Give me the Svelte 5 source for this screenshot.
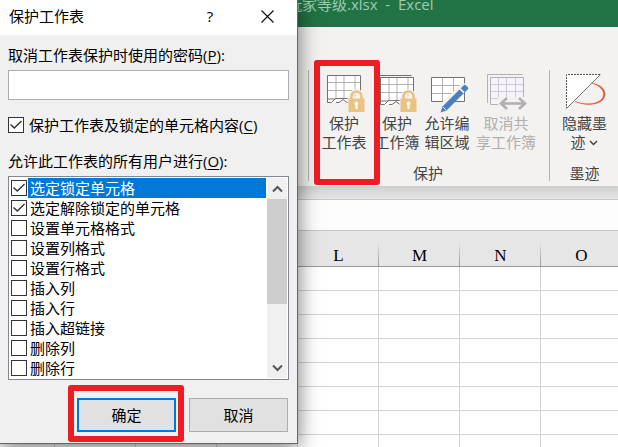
<script>
  const columns = ['', '', '', '', 'L', 'M', 'N', 'O'];
  const rows = Array.from({ length: 8 }, (_, i) => i);

  let options = $state([
    { label: '选定锁定单元格', checked: true },
    { label: '选定解除锁定的单元格', checked: true },
    { label: '设置单元格格式', checked: false },
    { label: '设置列格式', checked: false },
    { label: '设置行格式', checked: false },
    { label: '插入列', checked: false },
    { label: '插入行', checked: false },
    { label: '插入超链接', checked: false },
    { label: '删除列', checked: false },
    { label: '删除行', checked: false }
  ]);
  let selected = $state(0);
  let protect = $state(true);
  let password = $state('');
</script>

{#snippet lock(x)}
  <g transform="translate({x} 17)">
    <path d="M1 8h15v14H1z" fill="#f3f2f1" stroke="#f3f2f1" stroke-width="3" />
    <path d="M3.500 9V6.500a5 5 0 0 1 10 0V9" fill="none" stroke="#f3f2f1" stroke-width="5" />
    <path d="M3.500 9V6.500a5 5 0 0 1 10 0V9" fill="none" stroke="#eac282" stroke-width="2.600" />
    <path d="M.5 8.500h16V22H.5z" fill="#eac282" />
    <path d="M8.500 11.500a2 2 0 0 0-1 3.700V19h2v-3.800a2 2 0 0 0-1-3.700z" fill="#fff" />
  </g>
{/snippet}

<div class="window">
  <header class="titlebar">玩家等级.xlsx&nbsp; -&nbsp; Excel</header>

  <div class="ribbon">
    <section class="group protection">
      <div class="tools">
        <button class="tool sheet">
          <svg viewBox="0 0 44 41" width="44" height="41" aria-hidden="true">
            <path d="M5.500 2.500h33v22l-13 5-4-3-4 3h-12z" fill="#fff" />
            <path d="M14 3v23M22 3v23M33 3v21M6 9.500h32M6 17.500h32" fill="none" stroke="#b3b1af" />
            <path d="M38.500 20V2.500h-33v27h4l4-4h14M14 29.500h3l4-3 4 3h3M5.500 26h8" fill="none" stroke="#737170" />
            {@render lock(26)}
          </svg>
          <span>保护<br />工作表</span>
        </button>
        <button class="tool book">
          <svg viewBox="0 0 44 41" width="44" height="41" aria-hidden="true">
            <path d="M5.500 4.500h33v22l-13 5-4-3-4 3h-12z" fill="#fff" />
            <path d="M14 5v23M22 5v23M33 5v21M6 11.500h32M6 19.500h32" fill="none" stroke="#b3b1af" />
            <path d="M3.500 26V2.500h33M38.500 22V4.500h-33v27h4l4-4h14M14 31.500h3l4-3 4 3h3M5.500 28h8" fill="none" stroke="#737170" />
            {@render lock(25)}
          </svg>
          <span>保护<br />工作簿</span>
        </button>
        <button class="tool range">
          <svg viewBox="0 0 44 41" width="44" height="41" aria-hidden="true">
            <path d="M6.500 4.500h33v24h-33z" fill="#fff" />
            <path d="M17.500 5v23M28.500 5v23M7 12.500h32M7 20.500h32" stroke="#b3b1af" />
            <path d="M6.500 4.500h33v24h-33z" fill="none" stroke="#737170" />
            <path d="M41 12 18 34l-3 6" stroke="#f3f2f1" stroke-width="8" fill="none" />
            <path d="m17.500 33.500 17-17 4 4-17 17-6 2z" fill="#4a80bd" />
            <path d="m35.800 15.200 3-3q1-1 2 0l2 2q1 1 0 2l-3 3z" fill="#4a80bd" />
            <path d="m18 34 3 3" stroke="#f3f2f1" />
          </svg>
          <span>允许编<br />辑区域</span>
        </button>
        <button class="tool share" disabled>
          <svg viewBox="0 0 44 41" width="44" height="41" aria-hidden="true">
            <path d="M6.500 4.500h33v27h-33z" fill="#f7f3fa" />
            <path d="M14.500 5v26M22.500 5v26M31.500 5v26M7 11.500h32M7 18.500h32M7 25.500h32" stroke="#cfc9d3" />
            <path d="M3.500 30V1.500h35M6.500 31.500v-27h33v27z" fill="none" stroke="#b5b0b8" />
            <path d="M14 24h31v14H14z" fill="#f3f2f1" />
            <path d="M19 30.500h20M23 25l-6 5.500 6 5.500M35 25l6 5.500-6 5.500" fill="none" stroke="#b1afb1" stroke-width="2.600" />
          </svg>
          <span>取消共<br />享工作簿</span>
        </button>
      </div>
      <h2>保护</h2>
      <div class="mark"></div>
    </section>
    <section class="group ink">
      <div class="tools">
        <button class="tool hide">
          <svg viewBox="0 0 44 41" width="44" height="41" aria-hidden="true">
            <path d="M3.500 1.500h34l-34 34z" fill="#fff" />
            <path d="M37 1.500H3.500V35" fill="none" stroke="#555" stroke-dasharray="2 1" />
            <path d="m37.500 1.500-34 34" stroke="#777" />
            <path d="M28.500 10c9 1.500 14 6 13.500 12-.5 8-15 13-30 6.500 14 5 27.500 1.500 28.500-6.500.5-5-4-9.500-12-12z" fill="#d9583a" stroke="#d9583a" stroke-width=".5" />
          </svg>
          <span>隐藏墨<br />迹 <svg class="caret" viewBox="0 0 9 6" width="9" height="6" aria-hidden="true"><path d="m1 1 3.500 3.500L8 1" fill="none" stroke="#444" stroke-width="1.500" /></svg></span>
        </button>
      </div>
      <h2>墨迹</h2>
    </section>
  </div>

  <div class="shade"></div>
  <input class="formula" aria-label="编辑栏" />

  <table>
    <thead>
      <tr>
        {#each columns as column}
          <th scope="col">{column}</th>
        {/each}
      </tr>
    </thead>
    <tbody>
      {#each rows as row (row)}
        <tr>
          {#each columns as column}
            <td></td>
          {/each}
        </tr>
      {/each}
    </tbody>
  </table>

  <div class="dialog" role="dialog" aria-labelledby="dialog-title">
    <div class="caption">
      <h1 id="dialog-title">保护工作表</h1>
      <button class="help">?</button>
      <button class="close" aria-label="关闭">
        <svg viewBox="0 0 13 13" width="13" height="13"><path d="m.5.5 12 12M12.500.5l-12 12" stroke="#111" stroke-width="1.200" /></svg>
      </button>
    </div>
    <form class="body" onsubmit={(e) => e.preventDefault()}>
      <label for="password">取消工作表保护时使用的密码(<u>P</u>):</label>
      <input id="password" class="password" type="password" bind:value={password} />
      <label class="check">
        <input type="checkbox" bind:checked={protect} />
        <span>保护工作表及锁定的单元格内容(<u>C</u>)</span>
      </label>
      <div id="list-label">允许此工作表的所有用户进行(<u>O</u>):</div>
      <div class="listbox">
        <div class="options" role="group" aria-labelledby="list-label">
          {#each options as option, i}
            <label class="option" class:selected={i === selected}>
              <input type="checkbox" bind:checked={option.checked} onfocus={() => (selected = i)} />
              <span>{option.label}</span>
            </label>
          {/each}
        </div>
        <div class="scrollbar">
          <button type="button" aria-label="向上滚动">
            <svg viewBox="0 0 11 8" width="11" height="8"><path d="m1 6.500 4.500-4.500L10 6.500" fill="none" stroke="#555" stroke-width="2" /></svg>
          </button>
          <div class="thumb"></div>
          <button type="button" aria-label="向下滚动">
            <svg viewBox="0 0 11 8" width="11" height="8"><path d="m1 1.500 4.500 4.500L10 1.500" fill="none" stroke="#555" stroke-width="2" /></svg>
          </button>
        </div>
      </div>
      <div class="actions">
        <div class="confirm">
          <button class="default" type="submit">确定</button>
          <div class="mark"></div>
        </div>
        <button type="button">取消</button>
      </div>
    </form>
  </div>
</div>

<style>
  :global(body) {
    overflow: hidden;
  }
  .window,
  .window * {
    box-sizing: border-box;
  }
  .window {
    position: relative;
    height: 100vh;
    overflow: hidden;
    background: #fff;
    font: 15px/20px 'Open Sans', 'Noto Sans CJK SC', sans-serif;
    color: #000;
  }
  button,
  input {
    font: inherit;
    color: inherit;
    margin: 0;
    padding: 0;
    border: 0;
    background: none;
    border-radius: 0;
  }
  h1,
  h2 {
    margin: 0;
    font: inherit;
  }
  svg {
    display: block;
  }
  .titlebar {
    height: 27px;
    padding-left: 287px;
    background: #217346;
    color: #9fcbb2;
    line-height: 8px;
    white-space: pre;
  }
  .ribbon {
    display: flex;
    padding: 43px 0 5px 308px;
    background: #f3f2f1;
    color: #444;
    line-height: 19px;
  }
  .group {
    position: relative;
    display: flex;
    flex: none;
    flex-direction: column;
    justify-content: space-between;
    height: 111px;
    padding: 3px 2px 0 0;
    border-left: 1px solid #b5b3b1;
  }
  .protection {
    width: 241px;
  }
  .ink {
    width: 72px;
  }
  .tools {
    display: flex;
    justify-content: center;
  }
  .tool {
    display: flex;
    flex: none;
    flex-direction: column;
    align-items: center;
    white-space: nowrap;
  }
  .sheet {
    width: 56px;
  }
  .book {
    width: 50px;
  }
  .range {
    width: 50px;
  }
  .share {
    width: 68px;
  }
  .hide {
    width: 69px;
  }
  .tool:disabled {
    color: #b1afad;
  }
  .caret {
    display: inline-block;
    vertical-align: 2px;
  }
  .group h2 {
    text-align: center;
    line-height: 16px;
  }
  .mark {
    position: absolute;
    border: 6px solid #ee1c24;
    border-radius: 3px;
    pointer-events: none;
  }
  .group .mark {
    left: 5px;
    width: 66px;
    top: -10px;
    bottom: -4px;
  }
  .shade {
    height: 13px;
    background: linear-gradient(#cfcfcf, #e6e6e6);
  }
  .formula {
    display: block;
    width: 100%;
    height: 32px;
    padding-left: 308px;
    border: solid #c6c6c6;
    border-width: 1px 0;
    background: #fdfdfd;
  }
  table {
    width: 622px;
    table-layout: fixed;
    border-collapse: separate;
    border-spacing: 0;
  }
  th {
    width: 81px;
    height: 36px;
    padding: 14px 0 0;
    background: linear-gradient(#e6e6e6, #999) right bottom / 1px 24px no-repeat #e6e6e6;
    border-bottom: 1px solid #999;
    font: 17px/20px 'Liberation Serif', serif;
  }
  th:first-child {
    width: 55px;
  }
  td {
    height: 24px;
    padding: 0;
    border: solid #d4d4d4;
    border-width: 0 1px 1px 0;
  }
  .dialog {
    position: absolute;
    top: 0;
    left: 0;
    width: 298px;
    background: #f0f0f0;
    border: solid #666;
    border-width: 0 1px 1px 0;
    box-shadow: 0 4px 20px rgb(0 0 0 / 55%);
  }
  .caption {
    display: flex;
    align-items: center;
    height: 35px;
    padding: 0 23px 3px 9px;
    background: #fff;
  }
  .caption h1 {
    flex: 1;
  }
  .help {
    width: 12px;
    margin-right: 45px;
  }
  .body {
    display: flex;
    flex-direction: column;
    padding: 10px 8px 11px;
  }
  u {
    text-underline-offset: 2px;
    text-decoration-thickness: 1px;
  }
  .password {
    width: 100%;
    height: 30px;
    margin: 5px 0 15px;
    padding: 0 4px;
    border: 1px solid #abadb3;
    background: #fff;
  }
  .check {
    display: flex;
    align-items: center;
    gap: 5px;
    margin-bottom: 16px;
  }
  input[type='checkbox'] {
    display: grid;
    place-items: center;
    appearance: none;
    flex: none;
    width: 16px;
    height: 16px;
    border: 1px solid #333;
    background: #fff;
  }
  input[type='checkbox']:checked::after {
    content: '';
    width: 12px;
    height: 10px;
    background: #333;
    clip-path: polygon(0 50%, 8% 40%, 36% 70%, 92% 4%, 100% 14%, 36% 90%);
  }
  .listbox {
    display: flex;
    margin-top: 5px;
    padding: 1px;
    border: 1px solid #828790;
    background: #fff;
  }
  .options {
    flex: 1;
  }
  .option {
    display: flex;
    align-items: center;
    gap: 1px;
    padding-left: 1px;
  }
  .option span {
    flex: 1;
    padding-left: 2px;
  }
  .selected span {
    background: #0078d7;
    color: #fff;
  }
  .scrollbar {
    display: flex;
    flex-direction: column;
    width: 20px;
    margin-left: 1px;
    background: #f0f0f0;
  }
  .scrollbar button {
    display: grid;
    place-items: center;
    height: 21px;
  }
  .scrollbar button:last-child {
    margin-top: auto;
  }
  .thumb {
    height: 105px;
    background: #cdcdcd;
  }
  .actions {
    display: flex;
    justify-content: flex-end;
    gap: 13px;
    margin: 18px 1px 0 0;
  }
  .confirm {
    position: relative;
  }
  .confirm .mark {
    inset: -13px -8px -10px -9px;
  }
  .actions button {
    display: block;
    width: 99px;
    height: 34px;
    border: 1px solid #adadad;
    background: #e1e1e1;
  }
  .actions .default {
    border: 2px solid #0078d7;
  }
</style>
